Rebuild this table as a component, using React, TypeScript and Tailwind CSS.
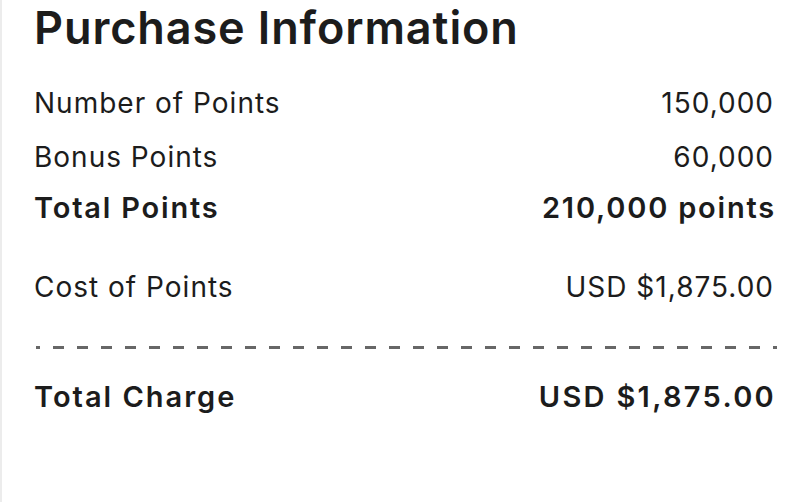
const rows = [
  { label: "Number of Points", value: "150,000" },
  { label: "Bonus Points", value: "60,000" },
];

export default function App() {
  return (
    <div
      className="w-[808px] h-[502px] bg-white border-l-2 border-[#ececec] text-[#1c1c1c] overflow-hidden"
      style={{ fontFamily: "Inter, 'Liberation Sans', sans-serif" }}
    >
      <div className="pl-[32px] pr-[34px]">
        <h1 className="text-[45px] font-semibold leading-[56px] tracking-[0.9px]">
          Purchase Information
        </h1>

        <div className="mt-[30px] flex flex-col gap-[20px] text-[28px] leading-[34px] tracking-[1px]">
          {rows.map((r) => (
            <div key={r.label} className="flex justify-between">
              <span>{r.label}</span>
              <span>{r.value}</span>
            </div>
          ))}
          <div className="flex justify-between text-[29px] font-semibold tracking-[1.8px] -mt-[3px]">
            <span>Total Points</span>
            <span className="-mr-[2px]">210,000 points</span>
          </div>
          <div className="flex justify-between mt-[25px]">
            <span>Cost of Points</span>
            <span>USD $1,875.00</span>
          </div>
        </div>

        <div className="mt-[42px] -mr-[3px] ml-[2px] h-[3px] bg-[linear-gradient(to_right,#676767_0_11px,transparent_11px_24px)] bg-[length:24px_3px] bg-[position:-7px_0] bg-repeat-x" />

        <div className="mt-[31px] flex justify-between text-[29px] leading-[34px] font-semibold tracking-[2px]">
          <span>Total Charge</span>
          <span className="-mr-[2px] tracking-[2.3px]">USD $1,875.00</span>
        </div>
      </div>
    </div>
  );
}
